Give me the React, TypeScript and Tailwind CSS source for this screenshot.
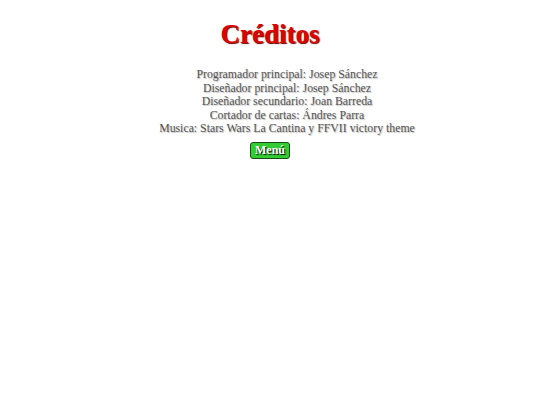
export default function App() {
  const lines = [
    "Programador principal: Josep Sánchez",
    "Diseñador principal: Josep Sánchez",
    "Diseñador secundario: Joan Barreda",
    "Cortador de cartas: Ándres Parra",
    "Musica: Stars Wars La Cantina y FFVII victory theme",
  ];

  return (
    <div className="flex min-h-[405px] w-full flex-col items-center bg-white font-['Liberation_Serif',serif]">
      <h1 className="mt-[18px] text-[27px] font-bold leading-[32px] text-[#dd0000] [text-shadow:1px_1px_1px_#660000]">
        Créditos
      </h1>
      <div className="mt-[18px] ml-[34px] flex flex-col items-center text-[11.8px] leading-[13.5px] text-[#555555] [text-shadow:1px_1px_1px_#bbbbbb]">
        {lines.map((line) => (
          <p key={line}>{line}</p>
        ))}
      </div>
      <button
        type="button"
        className="mt-[6px] rounded-[3px] border border-[#1a4d1a] bg-[#33cc33] px-[4px] text-[12px] font-bold leading-[15px] text-white [text-shadow:1px_1px_1px_#000000]"
      >
        Menú
      </button>
    </div>
  );
}
